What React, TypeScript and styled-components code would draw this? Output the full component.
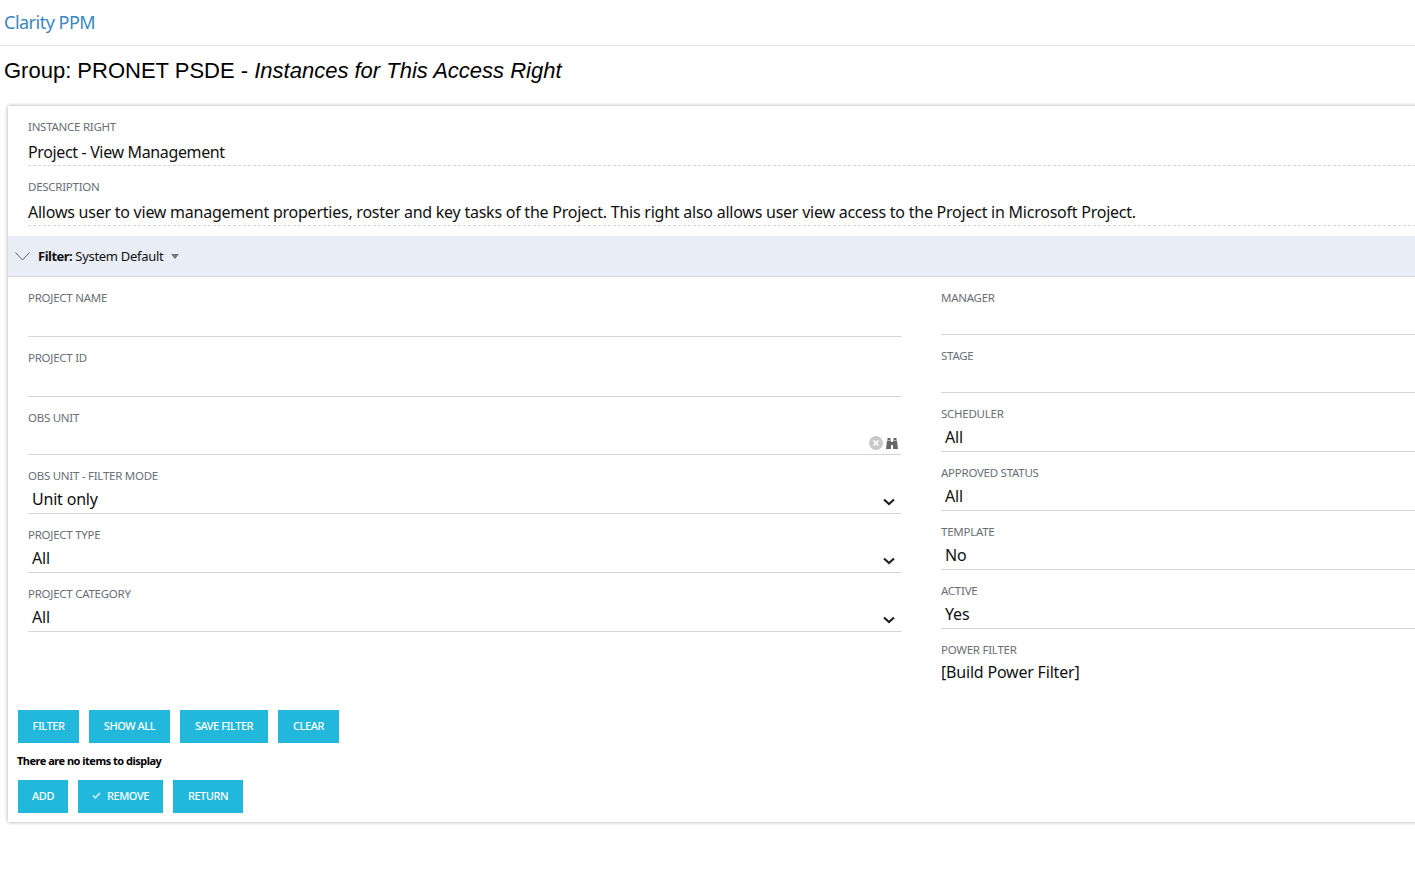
import React from 'react';
import styled, { createGlobalStyle } from 'styled-components';

const Global = createGlobalStyle`
  html, body { margin: 0; padding: 0; background: #fff; overflow: hidden; height: 870px; }
  * { box-sizing: border-box; }
`;
const FONT = `"Noto Sans", "Open Sans", sans-serif`;

const Page = styled.div`width: 1415px; height: 870px; overflow: hidden; font-family: ${FONT}; color: #111;`;
const TopBar = styled.header`height: 46px; border-bottom: 1px solid #e6e6e6; padding: 0 4px; display: flex; align-items: center;`;
const Brand = styled.a`font-size: 18px; color: #3a87c0; letter-spacing: -0.5px; line-height: 24px; margin-top: -1px;`;
const Title = styled.h1`
  margin: 0; padding: 11px 4px 0; height: 60px; font: 400 22px/28px "Liberation Sans", Arial, sans-serif; color: #000;
  em { font-style: italic; }
`;
const Panel = styled.section`
  margin-left: 8px; width: 1428px; height: 716px; background: #fff;
  box-shadow: 0 0 4px rgba(0,0,0,.35); display: flex; flex-direction: column;
`;
const Info = styled.div`padding: 13px 0 0 20px; height: 130px; display: flex; flex-direction: column; gap: 13px;`;
const InfoBlock = styled.div`height: 47px; border-bottom: 1px dashed #dcd6d8; display: flex; flex-direction: column;`;
const Label = styled.div`font-size: 11.5px; line-height: 17px; margin: -1px 0 1px; color: #6a6f76; letter-spacing: -0.26px; white-space: nowrap;`;
const InfoValue = styled.div<{ $ls: number }>`font-size: 16px; line-height: 22px; margin-top: 5px; letter-spacing: ${p => p.$ls}px; white-space: nowrap; color: #111;`;
const FilterBar = styled.div`
  height: 41px; background: #e9edf5; border-bottom: 1px solid #d5d7db; display: flex; align-items: center; padding-left: 7px;
  font-size: 13px; color: #111;
`;
const FilterText = styled.span`margin-left: 8px; letter-spacing: -0.3px; b { font-weight: 700; letter-spacing: -0.5px; }`;
const Caret = styled.span`margin-left: 8px; width: 0; height: 0; border-left: 4px solid transparent; border-right: 4px solid transparent; border-top: 5px solid #777; margin-top: 0;`;
const Columns = styled.div`display: flex; padding: 13px 0 0 20px; height: 433px;`;
const Column = styled.div<{ $w: number; $gap: number }>`width: ${p => p.$w}px; margin-right: ${p => p.$gap}px; flex: none; display: flex; flex-direction: column;`;
const Field = styled.div<{ $h: number; $nb?: boolean }>`
  height: ${p => p.$h}px; position: relative; display: flex; flex-direction: column;
  border-bottom: ${p => (p.$nb ? 'none' : '1px solid #d4d4d4')};
`;
const Slot = styled.div<{ $mb: number }>`margin-bottom: ${p => p.$mb}px; flex: none;`;
const FieldValue = styled.div<{ $flush?: boolean }>`
  font-size: 16px; line-height: 22px; padding-left: ${p => (p.$flush ? 0 : 4)}px; margin-top: ${p => (p.$flush ? 2 : 3)}px; letter-spacing: -0.2px; display: flex; align-items: center; justify-content: space-between; color: #111;
`;
const Chevron = styled.svg`width: 14px; height: 14px; margin-right: 5px; margin-top: 5px;`;
const Tools = styled.div`position: absolute; right: 3px; bottom: 4px; display: flex; align-items: center; gap: 3px;`;
const Buttons = styled.div`display: flex; gap: 10px; padding-left: 10px;`;
const Btn = styled.button<{ $w: number }>`
  width: ${p => p.$w}px; height: 33px; background: #22b8db; border: 0; color: #fff; font: 500 11px/31px ${FONT}; padding: 0 0 2px;
  letter-spacing: -0.45px; display: flex; align-items: center; justify-content: center; gap: 6px; text-transform: uppercase;
`;
const Note = styled.div`font-size: 11px; font-weight: 700; line-height: 16px; color: #000; padding: 10px 0 11px 9px; letter-spacing: -0.5px; height: 37px;`;

const Val = ({ label, value, h, mb, flush }: { label: string; value?: string; h: number; mb: number; flush?: boolean }) => (
  <Slot $mb={mb}>
    <Field $h={h}>
      <Label>{label}</Label>
      {value && <FieldValue $flush={flush}>{value}</FieldValue>}
    </Field>
  </Slot>
);
const Sel = ({ label, value, mb }: { label: string; value: string; mb: number }) => (
  <Slot $mb={mb}>
    <Field $h={46}>
      <Label>{label}</Label>
      <FieldValue>
        {value}
        <Chevron viewBox="0 0 14 14" fill="none" stroke="#222" strokeWidth="2.2"><path d="M2 4.5l5 4.5 5-4.5" /></Chevron>
      </FieldValue>
    </Field>
  </Slot>
);

export default function App() {
  return (
    <Page>
      <Global />
      <TopBar><Brand>Clarity PPM</Brand></TopBar>
      <Title>Group: PRONET PSDE - <em>Instances for This Access Right</em></Title>
      <Panel>
        <Info>
          <InfoBlock>
            <Label>INSTANCE RIGHT</Label>
            <InfoValue $ls={-0.36}>Project - View Management</InfoValue>
          </InfoBlock>
          <InfoBlock>
            <Label>DESCRIPTION</Label>
            <InfoValue $ls={-0.24}>Allows user to view management properties, roster and key tasks of the Project. This right also allows user view access to the Project in Microsoft Project.</InfoValue>
          </InfoBlock>
        </Info>
        <FilterBar>
          <svg width="15" height="9" viewBox="0 0 15 9" fill="none" stroke="#5a6472" strokeWidth="1"><path d="M0.5 0.5L7.5 8l7-7.5" /></svg>
          <FilterText><b>Filter:</b> System Default</FilterText>
          <Caret />
        </FilterBar>
        <Columns>
          <Column $w={873} $gap={40}>
            <Val label="PROJECT NAME" h={47} mb={13} />
            <Val label="PROJECT ID" h={47} mb={13} />
            <Slot $mb={13}>
              <Field $h={45}>
                <Label>OBS UNIT</Label>
                <Tools>
                  <svg width="14" height="14" viewBox="0 0 14 14"><circle cx="7" cy="7" r="7" fill="#c9c9c9" /><path d="M4.5 4.5l5 5m0-5l-5 5" stroke="#fff" strokeWidth="1.6" /></svg>
                  <svg width="12" height="11" viewBox="0 0 12 11" fill="#666"><path d="M1.5 0h3v2h-3zM7.5 0h3v2h-3zM1 2.5h4V4h2V2.5h4L12 11H7V7H5v4H0z" /></svg>
                </Tools>
              </Field>
            </Slot>
            <Sel label="OBS UNIT - FILTER MODE" value="Unit only" mb={13} />
            <Sel label="PROJECT TYPE" value="All" mb={13} />
            <Sel label="PROJECT CATEGORY" value="All" mb={0} />
          </Column>
          <Column $w={500} $gap={0}>
            <Val label="MANAGER" h={45} mb={13} />
            <Val label="STAGE" h={45} mb={13} />
            <Val label="SCHEDULER" value="All" h={46} mb={13} />
            <Val label="APPROVED STATUS" value="All" h={46} mb={13} />
            <Val label="TEMPLATE" value="No" h={46} mb={13} />
            <Val label="ACTIVE" value="Yes" h={46} mb={13} />
            <Slot $mb={0}>
              <Field $h={46} $nb>
                <Label>POWER FILTER</Label>
                <FieldValue $flush>[Build Power Filter]</FieldValue>
              </Field>
            </Slot>
          </Column>
        </Columns>
        <Buttons>
          <Btn $w={61}>Filter</Btn>
          <Btn $w={81}>Show All</Btn>
          <Btn $w={88}>Save Filter</Btn>
          <Btn $w={61}>Clear</Btn>
        </Buttons>
        <Note>There are no items to display</Note>
        <Buttons>
          <Btn $w={50}>Add</Btn>
          <Btn $w={85}>
            <svg width="9" height="7" viewBox="0 0 9 7" fill="none" stroke="#d5eef6" strokeWidth="1.6"><path d="M1 3.5l2.3 2.3L8 1" /></svg>
            Remove
          </Btn>
          <Btn $w={70}>Return</Btn>
        </Buttons>
      </Panel>
    </Page>
  );
}
